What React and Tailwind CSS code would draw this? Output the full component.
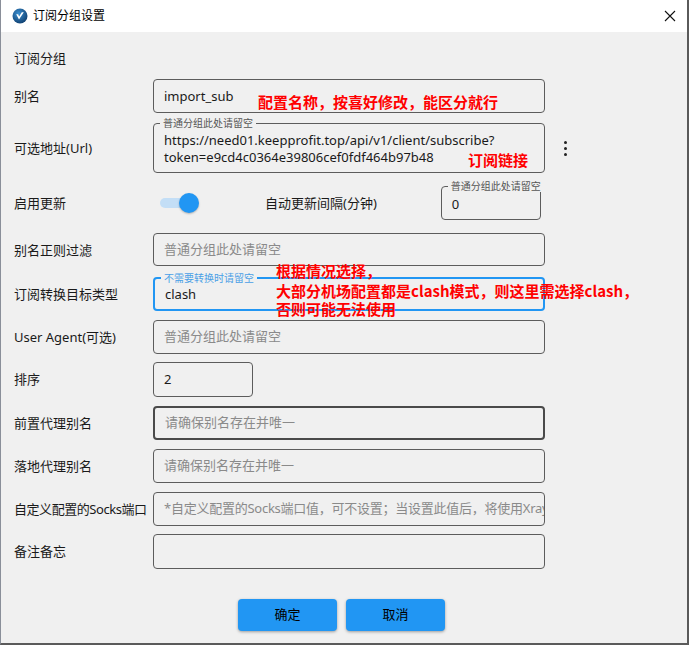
import React from "react";

const FONT = { fontFamily: '"Noto Sans", "Noto Sans CJK SC", sans-serif' };

function Label({ children }) {
  return (
    <div className="w-[139px] shrink-0 text-[13px] leading-[18px] text-[#1a1a1a]">
      {children}
    </div>
  );
}

function Box({ children, className = "", legend, legendClass = "text-[#555]" }) {
  return (
    <div
      className={`relative flex items-center rounded-[4px] pl-[10px] text-[13px] leading-[17px] ${className}`}
    >
      {legend && (
        <span
          className={`absolute left-[6px] top-[-7px] bg-[#f0f0f0] px-[3px] text-[10px] leading-[12px] whitespace-nowrap ${legendClass}`}
        >
          {legend}
        </span>
      )}
      {children}
    </div>
  );
}

const normal = "border border-[#5c5c5c]";

export default function App() {
  return (
    <div
      className="w-[689px] h-[645px] bg-[#f0f0f0] overflow-hidden relative border-l border-[#8a8f99] border-r-2 border-r-[#5a5a5a] border-b-2 border-b-[#5a5a5a]"
      style={FONT}
    >
      {/* Title bar */}
      <div className="h-[32px] bg-white flex items-center pl-[11px] pr-[10px]">
        <svg width="16" height="16" viewBox="0 0 16 16">
          <defs>
            <radialGradient id="g" cx="40%" cy="35%" r="70%">
              <stop offset="0%" stopColor="#3a8fd0" />
              <stop offset="100%" stopColor="#0f3e6e" />
            </radialGradient>
          </defs>
          <circle cx="8" cy="8" r="7.5" fill="url(#g)" />
          <path d="M4.2 6.2 L7 11.5 L11.8 4.2 L9.8 4.2 L7.1 8.6 L6.2 6.2 Z" fill="#fff" />
        </svg>
        <span className="ml-[5px] text-[12px] leading-[16px] text-black">订阅分组设置</span>
        <div className="flex-1" />
        <svg width="12" height="12" viewBox="0 0 12 12" className="mr-[1px]">
          <path d="M1 1 L11 11 M11 1 L1 11" stroke="#111" strokeWidth="1.1" />
        </svg>
      </div>

      <div className="pl-[13px] pt-[17px]">
        <div className="text-[13px] leading-[18px] text-[#1a1a1a]">订阅分组</div>

        {/* row 1 */}
        <div className="flex items-center mt-[12px] h-[34px]">
          <Label>别名</Label>
          <Box className={`${normal} w-[392px] h-[34px]`}>
            <span className="text-[#1a1a1a]">import_sub</span>
          </Box>
        </div>

        {/* row 2 */}
        <div className="flex items-center mt-[10px] h-[50px]">
          <Label>可选地址(Url)</Label>
          <Box
            className={`${normal} w-[392px] h-[50px] pt-[1px]`}
            legend="普通分组此处请留空"
          >
            <div className="text-[#1a1a1a] leading-[17px]">
              <div>https://need01.keepprofit.top/api/v1/client/subscribe?</div>
              <div>token=e9cd4c0364e39806cef0fdf464b97b48</div>
            </div>
          </Box>
          <div className="ml-[19px] flex flex-col gap-[3px]">
            <span className="block w-[3px] h-[3px] rounded-full bg-[#222]" />
            <span className="block w-[3px] h-[3px] rounded-full bg-[#222]" />
            <span className="block w-[3px] h-[3px] rounded-full bg-[#222]" />
          </div>
        </div>

        {/* row 3 */}
        <div className="flex items-center mt-[13px] h-[33px]">
          <Label>启用更新</Label>
          <div className="relative w-[40px] h-[20px] ml-[7px] flex items-center">
            <div className="w-[26px] h-[10px] rounded-full bg-[#c3def6]" />
            <div className="absolute left-[19px] top-[0px] w-[20px] h-[20px] rounded-full bg-[#2196f3] shadow-[0_1px_2px_rgba(0,0,0,0.25)]" />
          </div>
          <span className="ml-[65px] text-[13px] leading-[18px] text-[#1a1a1a]">
            自动更新间隔(分钟)
          </span>
          <Box
            className={`${normal} ml-[64px] w-[100px] h-[34px] pt-[3px]`}
            legend="普通分组此处请留空"
          >
            <span className="text-[#1a1a1a]">0</span>
          </Box>
        </div>

        {/* row 4 */}
        <div className="flex items-center mt-[14px] h-[33px]">
          <Label>别名正则过滤</Label>
          <Box className={`${normal} w-[392px] h-[33px]`}>
            <span className="text-[#8a8a8a]">普通分组此处请留空</span>
          </Box>
        </div>

        {/* row 5 */}
        <div className="flex items-center mt-[11px] h-[33px]">
          <Label>订阅转换目标类型</Label>
          <Box
            className="border-2 border-[#2196f3] w-[392px] h-[34px] pl-[9px] pt-[1px]"
            legend="不需要转换时请留空"
            legendClass="text-[#4a9fe6]"
          >
            <span className="text-[#1a1a1a]">clash</span>
          </Box>
        </div>

        {/* row 6 */}
        <div className="flex items-center mt-[10px] h-[33px]">
          <Label>User Agent(可选)</Label>
          <Box className={`${normal} w-[392px] h-[34px]`}>
            <span className="text-[#8a8a8a]">普通分组此处请留空</span>
          </Box>
        </div>

        {/* row 7 */}
        <div className="flex items-center mt-[9px] h-[34px]">
          <Label>排序</Label>
          <Box className={`${normal} w-[100px] h-[35px]`}>
            <span className="text-[#1a1a1a]">2</span>
          </Box>
        </div>

        {/* row 8 */}
        <div className="flex items-center mt-[10px] h-[33px]">
          <Label>前置代理别名</Label>
          <Box className="border-2 border-[#4a4a4a] w-[392px] h-[34px] pl-[9px]">
            <span className="text-[#8a8a8a]">请确保别名存在并唯一</span>
          </Box>
        </div>

        {/* row 9 */}
        <div className="flex items-center mt-[10px] h-[33px]">
          <Label>落地代理别名</Label>
          <Box className={`${normal} w-[392px] h-[34px]`}>
            <span className="text-[#8a8a8a]">请确保别名存在并唯一</span>
          </Box>
        </div>

        {/* row 10 */}
        <div className="flex items-center mt-[10px] h-[33px]">
          <Label>
            <span className="whitespace-nowrap tracking-[-0.45px]">自定义配置的Socks端口</span>
          </Label>
          <Box className={`${normal} w-[392px] h-[34px] overflow-hidden`}>
            <span className="text-[#8a8a8a] whitespace-nowrap tracking-[-0.25px]">
              *自定义配置的Socks端口值，可不设置；当设置此值后，将使用Xray/sing-box
            </span>
          </Box>
        </div>

        {/* row 11 */}
        <div className="flex items-center mt-[9px] h-[34px]">
          <Label>备注备忘</Label>
          <Box className={`${normal} w-[392px] h-[35px]`} />
        </div>

        {/* buttons */}
        <div className="flex mt-[31px] ml-[224px] gap-[9px]">
          <button className="w-[99px] h-[32px] rounded-[4px] bg-[#2196f3] text-[13px] text-black shadow-[0_1px_3px_rgba(0,0,0,0.35)]">
            确定
          </button>
          <button className="w-[99px] h-[32px] rounded-[4px] bg-[#2196f3] text-[13px] text-black shadow-[0_1px_3px_rgba(0,0,0,0.35)]">
            取消
          </button>
        </div>
      </div>

      {/* red annotations */}
      <div
        className="absolute left-[257px] top-[92px] text-[15px] leading-[20px] font-bold text-[#ff0000] whitespace-nowrap"
        style={{ fontFamily: '"Noto Sans CJK SC", sans-serif' }}
      >
        配置名称，按喜好修改，能区分就行
      </div>
      <div
        className="absolute left-[467px] top-[150px] text-[15px] leading-[20px] font-bold text-[#ff0000] whitespace-nowrap"
        style={{ fontFamily: '"Noto Sans CJK SC", sans-serif' }}
      >
        订阅链接
      </div>
      <div
        className="absolute left-[275px] top-[261px] text-[15px] leading-[20px] font-bold text-[#ff0000] whitespace-nowrap"
        style={{ fontFamily: '"Noto Sans CJK SC", sans-serif' }}
      >
        <div>根据情况选择，</div>
        <div>大部分机场配置都是clash模式，则这里需选择clash，</div>
        <div className="-mt-[2px]">否则可能无法使用</div>
      </div>
    </div>
  );
}
